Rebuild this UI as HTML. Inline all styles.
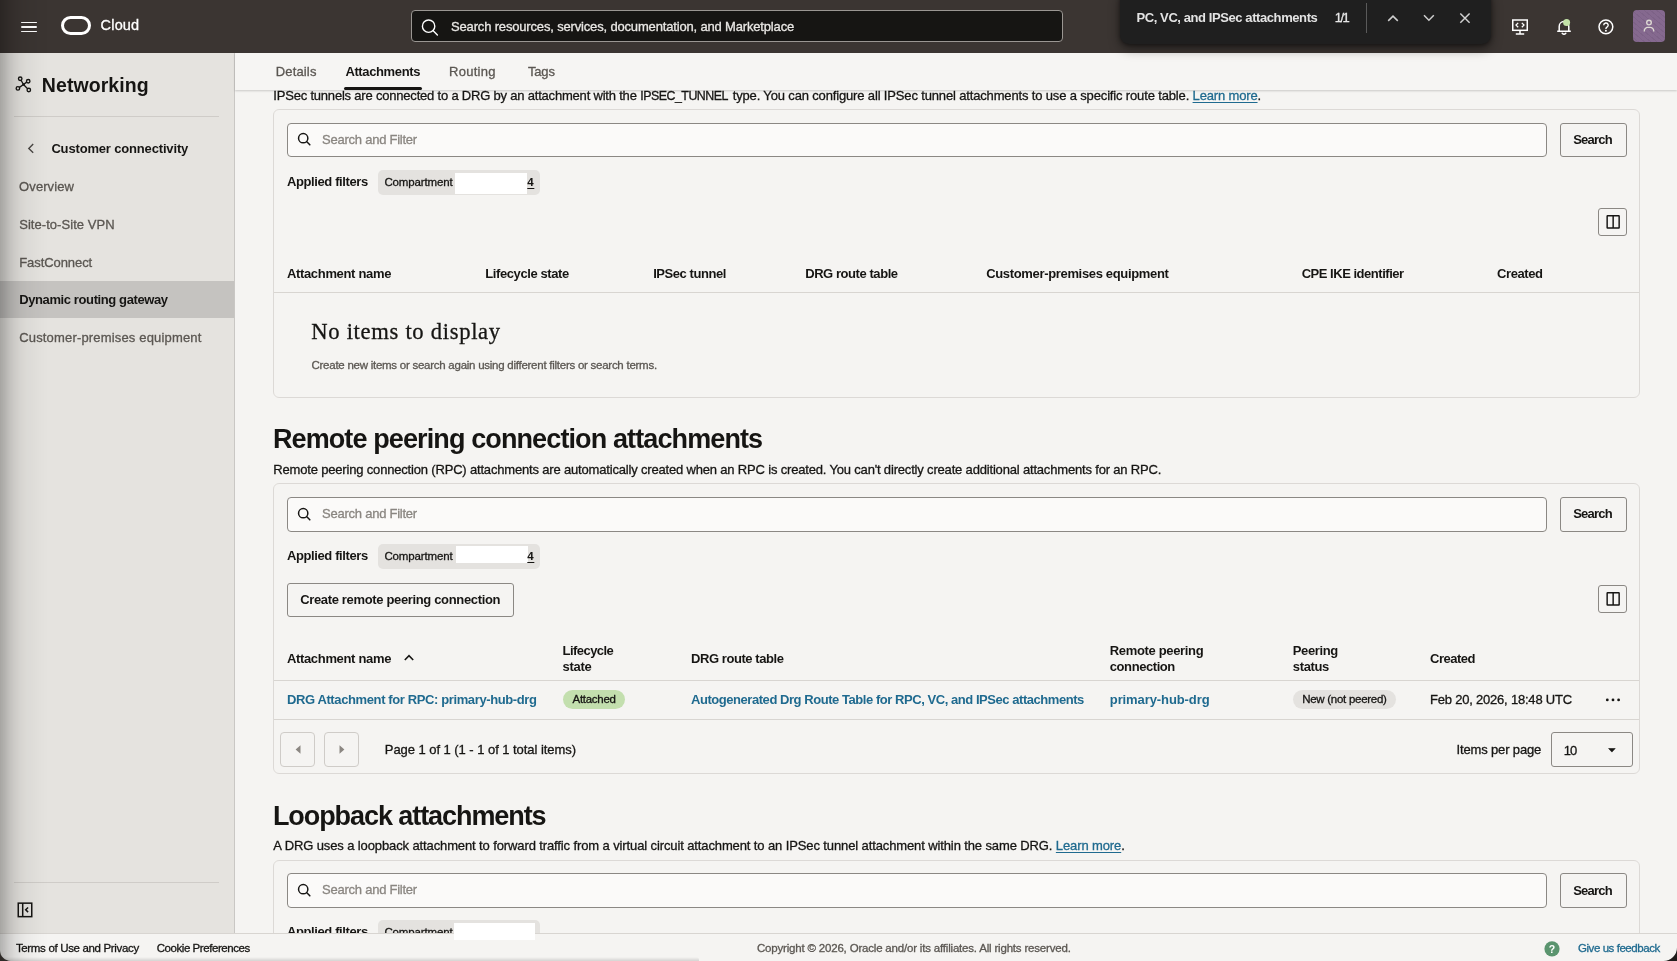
<!DOCTYPE html>
<html lang="en"><head><meta charset="utf-8"><title>Dynamic routing gateway - Attachments | Oracle Cloud</title>
<style>
*{box-sizing:border-box;margin:0;padding:0}
html,body{width:1677px;height:961px;overflow:hidden;background:#f5f4f2;font-family:'Liberation Sans',sans-serif;color:#161513}
body{position:relative}
#root{position:absolute;left:0;top:0;width:1677px;height:961px;overflow:hidden;will-change:transform}
.t{position:absolute;white-space:pre;display:block;font-weight:400;text-decoration:none;color:#161513;-webkit-text-stroke:.3px}
.t.bd{-webkit-text-stroke:0}
.t a{color:#1f6a8f;text-decoration:underline;text-underline-offset:2px}
.t u{text-underline-offset:1.5px}
.b{position:absolute;display:block}
#hdr{left:0;top:0;width:1677px;height:53px;background:#3b3532;z-index:30}
#sb{left:0;top:53px;width:234px;height:881px;background:#e5e3df}
#sbb{left:234px;top:53px;width:1px;height:881px;background:#c9c7c4}
#sbshadow{left:0;top:0;width:48px;height:961px;background:linear-gradient(90deg,rgba(0,0,0,.27) 0,rgba(0,0,0,.21) 5px,rgba(0,0,0,.145) 10px,rgba(0,0,0,.10) 15px,rgba(0,0,0,.065) 20px,rgba(0,0,0,.045) 25px,rgba(0,0,0,.03) 30px,rgba(0,0,0,.01) 40px,rgba(0,0,0,0) 48px);z-index:45}
#tabs{left:235px;top:53px;width:1442px;height:37px;background:#f6f5f3;z-index:20;box-shadow:0 1px 2px rgba(0,0,0,.18)}
#ft{left:0;top:933px;width:1677px;height:28px;background:#f5f4f2;border-top:1px solid #d8d5d1;z-index:40}
.panel{border:1px solid #dcd9d6;border-radius:6px;background:#f5f4f2}
.inp{border:1px solid #8b8884;border-radius:4px;background:#fbfaf9}
.btn{border:1px solid #8b8884;border-radius:3px;background:#f5f4f2}
.btnd{border:1px solid #cfccc8;border-radius:4px;background:#f5f4f2}
.hl{height:1px;background:#d8d5d1}
.chip{background:#e4e2df;border-radius:5px}
.white{background:#fff}
svg{position:absolute;overflow:visible}
</style></head>
<body><div id="root">
<nav aria-label="Networking">
<div class="b" id="sb"></div><div class="b" id="sbb"></div>
<div class="b" style="left:0px;top:281px;width:234px;height:37px;background:#c5c3c0"></div>
<div class="b" style="left:14px;top:116px;width:205px;height:1px;background:#cfccc8"></div>
<div class="b" style="left:14px;top:882px;width:205px;height:1px;background:#cfccc8"></div>
<svg style="left:14px;top:74px;z-index:5" width="20" height="20" viewBox="0 0 20 20" aria-hidden="true"><g stroke="#161513" fill="none" stroke-width="1.35"><path d="M9.5 10.5L6.9 6M9.5 10.5l3.5-2.6M9.5 10.5l-4.4 3.1M9.5 10.5l4.2 4.4"/><circle cx="6.2" cy="4.7" r="1.75" fill="#e1dfdb"/><circle cx="14.2" cy="7.2" r="1.75" fill="#e4e2de"/><circle cx="3.9" cy="14.4" r="1.75" fill="#dedcd8"/><circle cx="14.8" cy="16" r="1.75" fill="#e4e2de"/></g><circle cx="9.5" cy="10.5" r="1.3" fill="#161513"/></svg>
<h2 class="t bd" style="left:41.8px;top:72.5px;font-size:19.5px;line-height:25px;letter-spacing:0.079px;font-weight:700;">Networking</h2>
<svg style="left:26px;top:142px;z-index:5" width="10" height="13" viewBox="0 0 10 13" aria-hidden="true"><path d="M7.2 2L2.8 6.4l4.4 4.4" stroke="#4a4744" stroke-width="1.4" fill="none"/></svg>
<a class="t bd" style="left:51.4px;top:140.0px;font-size:13px;line-height:17px;letter-spacing:-0.163px;font-weight:700;">Customer connectivity</a>
<a class="t" style="left:19.1px;top:177.9px;font-size:13px;line-height:17px;letter-spacing:0.087px;color:#5b5752;">Overview</a>
<a class="t" style="left:19.2px;top:216.1px;font-size:13px;line-height:17px;letter-spacing:0.050px;color:#5b5752;">Site-to-Site VPN</a>
<a class="t" style="left:19.2px;top:253.9px;font-size:13px;line-height:17px;letter-spacing:-0.070px;color:#5b5752;">FastConnect</a>
<a class="t bd" aria-current="page" style="left:19.2px;top:291.0px;font-size:13px;line-height:17px;letter-spacing:-0.390px;font-weight:700;">Dynamic routing gateway</a>
<a class="t" style="left:19.2px;top:328.8px;font-size:13px;line-height:17px;letter-spacing:0.168px;color:#5b5752;">Customer-premises equipment</a>
<svg style="left:17px;top:902px;z-index:5" width="16" height="16" viewBox="0 0 16 16" aria-hidden="true"><g stroke="#161513" fill="none" stroke-width="1.5"><rect x="1.25" y="1.15" width="13.5" height="13.5"/><path d="M5.7 1.15v13.5"/></g><path d="M11.1 5.5L8.7 7.8l2.4 2.3" fill="none" stroke="#161513" stroke-width="1.5"/></svg>
</nav>
<main>
<p>
<span class="t" style="left:273.3px;top:87.0px;font-size:13px;line-height:17px;letter-spacing:-0.200px;">IPSec tunnels are connected to a DRG by an attachment with the</span>
<span class="t" style="left:640.2px;top:87.7px;font-size:12.4px;line-height:16px;letter-spacing:-0.489px;">IPSEC_TUNNEL</span>
<span class="t" style="left:732.7px;top:87.0px;font-size:13px;line-height:17px;letter-spacing:-0.152px;">type. You can configure all IPSec tunnel attachments to use a specific route table. <a>Learn more</a>.</span>
</p>
<div class="b panel" style="left:273px;top:109px;width:1367px;height:289px;"></div>
<div class="b inp" style="left:287px;top:123px;width:1260px;height:34px;"></div>
<svg style="left:294.4px;top:129.4px" width="20" height="20" viewBox="-10 -10 20 20" aria-hidden="true"><g fill="none" stroke="#161513" stroke-width="1.5" stroke-linecap="round"><circle cx="-0.8" cy="-0.8" r="4.65"/><path d="M2.79 2.79l3.04 3.04"/></g></svg>
<span class="t" style="left:322.1px;top:130.8px;font-size:13px;line-height:17px;letter-spacing:-0.244px;color:#8a8681;">Search and Filter</span>
<div class="b btn" style="left:1560px;top:123px;width:67px;height:34px;"></div>
<span class="t bd" style="left:1573.2px;top:131.3px;font-size:13px;line-height:17px;letter-spacing:-0.775px;font-weight:700;">Search</span>
<span class="t bd" style="left:286.9px;top:172.9px;font-size:13px;line-height:17px;letter-spacing:-0.378px;font-weight:700;">Applied filters</span>
<div class="b chip" style="left:378px;top:170px;width:162px;height:24.5px;"></div>
<span class="t" style="left:384.4px;top:174.9px;font-size:11.5px;line-height:15px;letter-spacing:-0.134px;">Compartment</span>
<div class="b white" style="left:455px;top:173px;width:72px;height:21px;"></div>
<span class="t bd" style="left:527.3px;top:174.9px;font-size:11.5px;line-height:15px;letter-spacing:0.625px;font-weight:700;"><u>4</u></span>
<div class="b btn" style="left:1598px;top:208px;width:29px;height:28px;"></div>
<svg style="left:1605.5px;top:215px" width="14" height="14" viewBox="0 0 14 14" aria-hidden="true"><g fill="none" stroke="#161513" stroke-width="1.45"><rect x="1.15" y="0.75" width="12" height="12.3" rx=".4"/><path d="M7.15 .7v12.4"/></g></svg>
<span class="t bd" style="left:286.9px;top:264.8px;font-size:13px;line-height:17px;letter-spacing:-0.327px;font-weight:700;">Attachment name</span>
<span class="t bd" style="left:485.3px;top:264.8px;font-size:13px;line-height:17px;letter-spacing:-0.408px;font-weight:700;">Lifecycle state</span>
<span class="t bd" style="left:653.2px;top:264.8px;font-size:13px;line-height:17px;letter-spacing:-0.448px;font-weight:700;">IPSec tunnel</span>
<span class="t bd" style="left:805.2px;top:264.8px;font-size:13px;line-height:17px;letter-spacing:-0.433px;font-weight:700;">DRG route table</span>
<span class="t bd" style="left:986.2px;top:264.8px;font-size:13px;line-height:17px;letter-spacing:-0.336px;font-weight:700;">Customer-premises equipment</span>
<span class="t bd" style="left:1301.7px;top:264.8px;font-size:13px;line-height:17px;letter-spacing:-0.478px;font-weight:700;">CPE IKE identifier</span>
<span class="t bd" style="left:1497.1px;top:264.8px;font-size:13px;line-height:17px;letter-spacing:-0.420px;font-weight:700;">Created</span>
<div class="b hl" style="left:274px;top:292px;width:1365px;height:1px;"></div>
<span class="t" style="left:311.3px;top:316.7px;font-size:22.6px;line-height:29px;letter-spacing:0.694px;font-family:'Liberation Serif',serif;">No items to display</span>
<span class="t" style="left:311.5px;top:358.1px;font-size:11.5px;line-height:15px;letter-spacing:-0.257px;color:#5b5752;">Create new items or search again using different filters or search terms.</span>
<h2 class="t bd" style="left:272.9px;top:421.7px;font-size:27px;line-height:35px;letter-spacing:-0.885px;font-weight:700;">Remote peering connection attachments</h2>
<p class="t" style="left:273.3px;top:460.5px;font-size:13px;line-height:17px;letter-spacing:-0.177px;">Remote peering connection (RPC) attachments are automatically created when an RPC is created. You can't directly create additional attachments for an RPC.</p>
<div class="b panel" style="left:273px;top:483px;width:1367px;height:291px;"></div>
<div class="b inp" style="left:287px;top:497px;width:1260px;height:35px;"></div>
<svg style="left:294.4px;top:503.6px" width="20" height="20" viewBox="-10 -10 20 20" aria-hidden="true"><g fill="none" stroke="#161513" stroke-width="1.5" stroke-linecap="round"><circle cx="-0.8" cy="-0.8" r="4.65"/><path d="M2.79 2.79l3.04 3.04"/></g></svg>
<span class="t" style="left:322.1px;top:504.8px;font-size:13px;line-height:17px;letter-spacing:-0.244px;color:#8a8681;">Search and Filter</span>
<div class="b btn" style="left:1560px;top:497px;width:67px;height:35px;"></div>
<span class="t bd" style="left:1573.2px;top:505.3px;font-size:13px;line-height:17px;letter-spacing:-0.775px;font-weight:700;">Search</span>
<span class="t bd" style="left:286.9px;top:546.9px;font-size:13px;line-height:17px;letter-spacing:-0.378px;font-weight:700;">Applied filters</span>
<div class="b chip" style="left:378px;top:544px;width:162px;height:24.5px;"></div>
<span class="t" style="left:384.4px;top:548.9px;font-size:11.5px;line-height:15px;letter-spacing:-0.134px;">Compartment</span>
<div class="b white" style="left:456px;top:546px;width:72px;height:17px;"></div>
<span class="t bd" style="left:527.3px;top:548.9px;font-size:11.5px;line-height:15px;letter-spacing:0.625px;font-weight:700;"><u>4</u></span>
<div class="b btn" style="left:287px;top:582.5px;width:227px;height:34.0px;"></div>
<span class="t bd" style="left:300.2px;top:591.0px;font-size:13px;line-height:17px;letter-spacing:-0.344px;font-weight:700;">Create remote peering connection</span>
<div class="b btn" style="left:1598px;top:585px;width:29px;height:28px;"></div>
<svg style="left:1605.5px;top:592px" width="14" height="14" viewBox="0 0 14 14" aria-hidden="true"><g fill="none" stroke="#161513" stroke-width="1.45"><rect x="1.15" y="0.75" width="12" height="12.3" rx=".4"/><path d="M7.15 .7v12.4"/></g></svg>
<span class="t bd" style="left:286.9px;top:650.3px;font-size:13px;line-height:17px;letter-spacing:-0.327px;font-weight:700;">Attachment name</span>
<svg style="left:404px;top:654px" width="10" height="7" viewBox="0 0 10 7" aria-hidden="true"><path d="M.8 6L5 1.6 9.2 6" fill="none" stroke="#161513" stroke-width="1.6"/></svg>
<span class="t bd" style="left:562.6px;top:641.9px;font-size:13px;line-height:17px;letter-spacing:-0.557px;font-weight:700;">Lifecycle</span>
<span class="t bd" style="left:562.6px;top:657.8px;font-size:13px;line-height:17px;letter-spacing:-0.290px;font-weight:700;">state</span>
<span class="t bd" style="left:691.0px;top:650.3px;font-size:13px;line-height:17px;letter-spacing:-0.433px;font-weight:700;">DRG route table</span>
<span class="t bd" style="left:1109.8px;top:641.9px;font-size:13px;line-height:17px;letter-spacing:-0.342px;font-weight:700;">Remote peering</span>
<span class="t bd" style="left:1109.8px;top:657.8px;font-size:13px;line-height:17px;letter-spacing:-0.427px;font-weight:700;">connection</span>
<span class="t bd" style="left:1292.8px;top:641.9px;font-size:13px;line-height:17px;letter-spacing:-0.365px;font-weight:700;">Peering</span>
<span class="t bd" style="left:1292.8px;top:657.8px;font-size:13px;line-height:17px;letter-spacing:-0.359px;font-weight:700;">status</span>
<span class="t bd" style="left:1430.0px;top:650.3px;font-size:13px;line-height:17px;letter-spacing:-0.487px;font-weight:700;">Created</span>
<div class="b hl" style="left:274px;top:680px;width:1365px;height:1px;"></div>
<a class="t bd" style="left:286.9px;top:691.1px;font-size:13px;line-height:17px;letter-spacing:-0.381px;font-weight:700;color:#1f6a8f;">DRG Attachment for RPC: primary-hub-drg</a>
<div class="b" style="left:562.9px;top:690px;width:62.2px;height:19px;background:#c3dfae;border-radius:10px"></div>
<span class="t" style="left:572.5px;top:691.8px;font-size:11.5px;line-height:15px;letter-spacing:-0.282px;">Attached</span>
<a class="t bd" style="left:691.0px;top:691.1px;font-size:13px;line-height:17px;letter-spacing:-0.449px;font-weight:700;color:#1f6a8f;">Autogenerated Drg Route Table for RPC, VC, and IPSec attachments</a>
<a class="t bd" style="left:1109.8px;top:691.1px;font-size:13px;line-height:17px;letter-spacing:-0.095px;font-weight:700;color:#1f6a8f;">primary-hub-drg</a>
<div class="b" style="left:1293.1px;top:690px;width:102.6px;height:19px;background:#e4e2df;border-radius:10px"></div>
<span class="t" style="left:1302.2px;top:691.8px;font-size:11.5px;line-height:15px;letter-spacing:-0.275px;">New (not peered)</span>
<span class="t" style="left:1430.0px;top:691.1px;font-size:13px;line-height:17px;letter-spacing:-0.209px;">Feb 20, 2026, 18:48 UTC</span>
<svg style="left:1604px;top:696px" width="18" height="8" viewBox="0 0 18 8" aria-hidden="true"><circle cx="3.3" cy="3.9" r="1.4" fill="#161513"/><circle cx="9" cy="3.9" r="1.4" fill="#161513"/><circle cx="14.6" cy="3.9" r="1.4" fill="#161513"/></svg>
<div class="b hl" style="left:274px;top:719px;width:1365px;height:1px;"></div>
<div class="b btnd" style="left:280px;top:732px;width:35px;height:34.5px;"></div>
<div class="b btnd" style="left:324px;top:732px;width:35px;height:34.5px;"></div>
<svg style="left:294.5px;top:745px" width="6" height="9" viewBox="0 0 6 9" aria-hidden="true"><path d="M5.5 .3v8.4L.6 4.5z" fill="#8b8782"/></svg>
<svg style="left:338.5px;top:745px" width="6" height="9" viewBox="0 0 6 9" aria-hidden="true"><path d="M.5 .3v8.4l4.9-4.2z" fill="#8b8782"/></svg>
<span class="t" style="left:384.8px;top:740.7px;font-size:13px;line-height:17px;letter-spacing:-0.047px;">Page 1 of 1 (1 - 1 of 1 total items)</span>
<span class="t" style="left:1456.5px;top:740.7px;font-size:13px;line-height:17px;letter-spacing:-0.148px;">Items per page</span>
<div class="b btn" style="left:1551px;top:732px;width:82px;height:34.5px;"></div>
<span class="t" style="left:1563.8px;top:741.5px;font-size:13px;line-height:17px;letter-spacing:-0.969px;">10</span>
<svg style="left:1608px;top:747.6px" width="8" height="5" viewBox="0 0 8 5" aria-hidden="true"><path d="M.6 .5h6.6L3.9 4.1z" fill="#161513" stroke="#161513" stroke-width=".6" stroke-linejoin="round"/></svg>
<h2 class="t bd" style="left:272.9px;top:799.2px;font-size:27px;line-height:35px;letter-spacing:-1.069px;font-weight:700;">Loopback attachments</h2>
<p class="t" style="left:273.3px;top:837.1px;font-size:13px;line-height:17px;letter-spacing:-0.114px;">A DRG uses a loopback attachment to forward traffic from a virtual circuit attachment to an IPSec tunnel attachment within the same DRG. <a>Learn more</a>.</p>
<div class="b panel" style="left:273px;top:860px;width:1367px;height:130px;"></div>
<div class="b inp" style="left:287px;top:873px;width:1260px;height:35px;"></div>
<svg style="left:294.4px;top:880.0px" width="20" height="20" viewBox="-10 -10 20 20" aria-hidden="true"><g fill="none" stroke="#161513" stroke-width="1.5" stroke-linecap="round"><circle cx="-0.8" cy="-0.8" r="4.65"/><path d="M2.79 2.79l3.04 3.04"/></g></svg>
<span class="t" style="left:322.1px;top:881.1px;font-size:13px;line-height:17px;letter-spacing:-0.244px;color:#8a8681;">Search and Filter</span>
<div class="b btn" style="left:1560px;top:873px;width:67px;height:35px;"></div>
<span class="t bd" style="left:1573.2px;top:881.6px;font-size:13px;line-height:17px;letter-spacing:-0.775px;font-weight:700;">Search</span>
<span class="t bd" style="left:286.9px;top:923.2px;font-size:13px;line-height:17px;letter-spacing:-0.378px;font-weight:700;">Applied filters</span>
<div class="b chip" style="left:378px;top:920.3px;width:162px;height:24.5px;"></div>
<span class="t" style="left:384.4px;top:925.2px;font-size:11.5px;line-height:15px;letter-spacing:-0.134px;">Compartment</span>
<div class="b white" style="left:454px;top:923px;width:81px;height:17px;z-index:43"></div>
<span class="t bd" style="left:527.3px;top:925.2px;font-size:11.5px;line-height:15px;letter-spacing:0.625px;font-weight:700;"><u>4</u></span>
</main>
<div role="tablist">
<div class="b" id="tabs"></div>
<a class="t" style="left:275.8px;top:63.3px;font-size:13px;line-height:17px;letter-spacing:0.142px;color:#5b5752;z-index:21;">Details</a>
<a class="t bd" aria-current="true" style="left:345.4px;top:63.3px;font-size:13px;line-height:17px;letter-spacing:-0.375px;font-weight:700;z-index:21;">Attachments</a>
<a class="t" style="left:449.1px;top:63.3px;font-size:13px;line-height:17px;letter-spacing:0.265px;color:#5b5752;z-index:21;">Routing</a>
<a class="t" style="left:528.0px;top:63.3px;font-size:13px;line-height:17px;letter-spacing:-0.190px;color:#5b5752;z-index:21;">Tags</a>
<div class="b" style="left:344px;top:86.8px;width:77.5px;height:2.8px;background:#161513;border-radius:2px;z-index:22"></div>
</div>
<header>
<div class="b" id="hdr"></div>
<div class="b" style="left:21.2px;top:21.7px;width:15.6px;height:1.6px;background:#fff;z-index:31;border-radius:1px"></div>
<div class="b" style="left:21.2px;top:26.2px;width:15.6px;height:1.6px;background:#fff;z-index:31;border-radius:1px"></div>
<div class="b" style="left:21.2px;top:30.6px;width:15.6px;height:1.6px;background:#fff;z-index:31;border-radius:1px"></div>
<div class="b" style="left:60.8px;top:15.6px;width:29.8px;height:19.4px;border:3.7px solid #fff;border-radius:9.8px;z-index:31"></div>
<span class="t" style="left:100.6px;top:16.2px;font-size:14.5px;line-height:19px;letter-spacing:0.170px;color:#ffffff;z-index:31;">Cloud</span>
<div class="b" style="left:411px;top:10px;width:652px;height:32px;background:#161513;border:1px solid #9a9692;border-radius:4px;z-index:31"></div>
<svg style="left:420px;top:18px;z-index:32" width="20" height="20" viewBox="0 0 20 20" aria-hidden="true"><g stroke="#fff" fill="none" stroke-width="1.4" stroke-linecap="round"><circle cx="8.6" cy="8.2" r="6.2"/><path d="M13.2 12.8L17.4 17"/></g></svg>
<span class="t" style="left:451.0px;top:18.3px;font-size:13px;line-height:17px;letter-spacing:-0.165px;color:#e9e7e4;z-index:32;">Search resources, services, documentation, and Marketplace</span>
<div class="b" style="left:1120px;top:-10px;width:371px;height:54px;background:#1f1f1f;border-radius:9px;z-index:31;box-shadow:0 1px 4px rgba(0,0,0,.45),0 5px 12px rgba(0,0,0,.4)"></div>
<span class="t bd" style="left:1136.5px;top:9.4px;font-size:13px;line-height:17px;letter-spacing:-0.415px;font-weight:700;color:#e3e3e3;z-index:32;">PC, VC, and IPSec attachments</span>
<span class="t" style="left:1334.7px;top:9.4px;font-size:13px;line-height:17px;letter-spacing:-1.489px;color:#e6e6e6;z-index:32;">1/1</span>
<div class="b" style="left:1366.3px;top:3px;width:1.0px;height:30px;background:#5a5a5a;z-index:32"></div>
<svg style="left:1386px;top:13px;z-index:32" width="14" height="10" viewBox="0 0 14 10" aria-hidden="true"><path d="M2.2 7.9L7 3.1l4.8 4.8" stroke="#cfcfcf" stroke-width="1.5" fill="none"/></svg>
<svg style="left:1422px;top:13px;z-index:32" width="14" height="10" viewBox="0 0 14 10" aria-hidden="true"><path d="M2 2.3L6.9 7.2l4.9-4.9" stroke="#cfcfcf" stroke-width="1.5" fill="none"/></svg>
<svg style="left:1459px;top:12px;z-index:32" width="12" height="12" viewBox="0 0 12 12" aria-hidden="true"><path d="M1.3 1.5l9.3 9.3M10.6 1.5L1.3 10.8" stroke="#cfcfcf" stroke-width="1.5" fill="none"/></svg>
<svg style="left:1511px;top:18px;z-index:32" width="18" height="18" viewBox="0 0 18 18" aria-hidden="true"><g stroke="#fff" fill="none" stroke-width="1.5"><rect x="1.75" y="2" width="14.5" height="10.3"/><path d="M9 12.3v3M4.8 16h8.4"/><path d="M7.2 4.9L5 7.1l2.2 2.2M10.8 4.9L13 7.1l-2.2 2.2" stroke-width="1.3"/></g></svg>
<svg style="left:1556px;top:18px;z-index:32" width="17" height="18" viewBox="0 0 17 18" aria-hidden="true"><g stroke="#fff" fill="none" stroke-width="1.5" stroke-linejoin="round"><path d="M1.2 13.2h13.6M3.2 13.2V8.4a4.8 4.8 0 0 1 9.6 0v4.8"/><path d="M6.2 15.3q1.8 1.9 3.6 0" stroke-linecap="round"/></g><circle cx="10.6" cy="4.6" r="3.5" fill="#c3e2a8"/></svg>
<svg style="left:1597px;top:18px;z-index:32" width="18" height="18" viewBox="0 0 18 18" aria-hidden="true"><g stroke="#fff" fill="none" stroke-width="1.5"><circle cx="8.9" cy="8.8" r="6.9"/><path d="M6.7 7.2a2.25 2.25 0 1 1 3.3 2c-.8.45-1.1.9-1.1 1.8" stroke-width="1.4"/></g><circle cx="8.9" cy="12.7" r=".95" fill="#fff"/></svg>
<div class="b" style="left:1633px;top:10px;width:32px;height:32px;background:#85698f repeating-linear-gradient(40deg,rgba(255,255,255,0) 0 3px,rgba(60,40,70,.10) 3px 4px);border-radius:4px;z-index:31"></div>
<svg style="left:1641px;top:17px;z-index:32" width="16" height="16" viewBox="0 0 16 16" aria-hidden="true"><g stroke="#dcd7d2" fill="none" stroke-width="1.4"><circle cx="8" cy="5.6" r="2.3"/><path d="M3.3 14.4v-.6a3.4 3.4 0 0 1 3.4-3.4h2.6a3.4 3.4 0 0 1 3.4 3.4v.6"/></g></svg>
</header>
<footer>
<div class="b" id="ft"></div>
<a class="t" style="left:15.9px;top:941.1px;font-size:11.5px;line-height:15px;letter-spacing:-0.334px;z-index:41;">Terms of Use and Privacy</a>
<a class="t" style="left:156.7px;top:941.1px;font-size:11.5px;line-height:15px;letter-spacing:-0.439px;z-index:41;">Cookie Preferences</a>
<span class="t" style="left:757.0px;top:941.1px;font-size:11.5px;line-height:15px;letter-spacing:-0.190px;color:#5b5752;z-index:41;">Copyright © 2026, Oracle and/or its affiliates. All rights reserved.</span>
<svg style="left:1544px;top:941px;z-index:42" width="16" height="16" viewBox="0 0 16 16" aria-hidden="true"><circle cx="8" cy="7.8" r="7.6" fill="#5a946e"/><text x="8" y="11.6" text-anchor="middle" font-family="Liberation Sans,sans-serif" font-weight="700" font-size="10.5" fill="#fff">?</text></svg>
<a class="t" style="left:1578.0px;top:941.1px;font-size:11.5px;line-height:15px;letter-spacing:-0.442px;color:#1f6a8f;z-index:41;">Give us feedback</a>
</footer>
<div aria-hidden="true">
<div class="b" id="sbshadow"></div>
<div class="b" style="left:0px;top:957px;width:699px;height:4px;background:linear-gradient(180deg,rgba(0,0,0,0),rgba(0,0,0,.13));border-radius:0 3px 0 0;z-index:46"></div>
<svg style="left:0;top:949px;z-index:47" width="13" height="12" viewBox="0 0 13 12" aria-hidden="true"><path d="M0 1.2A10.8 10.8 0 0 0 10.8 12H0z" fill="#2e2a27"/></svg>
<svg style="left:1663px;top:947px;z-index:47" width="14" height="14" viewBox="0 0 14 14" aria-hidden="true"><path d="M14 .5A13.5 13.5 0 0 1 .5 14H14z" fill="#1d1b1a"/></svg>
</div>
</div></body></html>
